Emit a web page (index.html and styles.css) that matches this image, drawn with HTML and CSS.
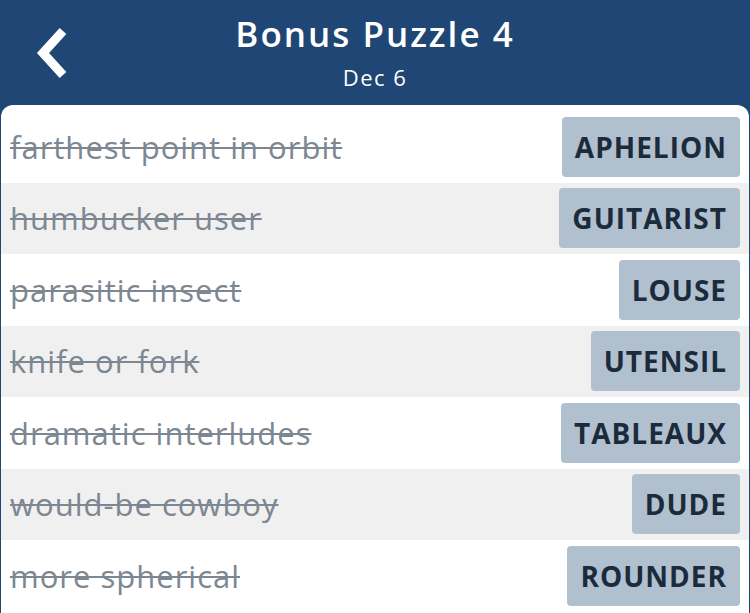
FILE: index.html
```html
<!DOCTYPE html>
<html lang="en">
<head>
    <meta charset="UTF-8">
    <meta name="viewport" content="width=device-width, initial-scale=1.0">
    <title>Bonus Puzzle 4</title>
    <link rel="stylesheet" href="styles.css">
</head>
<body>

    <header class="top-bar">
        <a class="back" href="#" aria-label="Back">
            <svg width="34" height="54" viewBox="0 0 34 54">
                <path d="M29 5 L9 27 L29 49" fill="none" stroke="#fff" stroke-width="9" stroke-linecap="butt" stroke-linejoin="miter"/>
            </svg>
        </a>
        <div class="titles">
            <h1>Bonus Puzzle 4</h1>
            <p>Dec 6</p>
        </div>
    </header>

    <!-- solved clues -->
    <ul class="clue-list">
        <li class="clue">
            <span class="clue-text">farthest point in orbit</span>
            <span class="answer">APHELION</span>
        </li>
        <li class="clue">
            <span class="clue-text">humbucker user</span>
            <span class="answer">GUITARIST</span>
        </li>
        <li class="clue">
            <span class="clue-text">parasitic insect</span>
            <span class="answer">LOUSE</span>
        </li>
        <li class="clue">
            <span class="clue-text">knife or fork</span>
            <span class="answer">UTENSIL</span>
        </li>
        <li class="clue">
            <span class="clue-text">dramatic interludes</span>
            <span class="answer">TABLEAUX</span>
        </li>
        <li class="clue">
            <span class="clue-text">would-be cowboy</span>
            <span class="answer">DUDE</span>
        </li>
        <li class="clue">
            <span class="clue-text">more spherical</span>
            <span class="answer">ROUNDER</span>
        </li>
    </ul>

</body>
</html>
```

FILE: styles.css
```css
body {
    margin: 0;
    padding: 0;
    font-family: "Open Sans", Lato, sans-serif;
    background-color: #1f4674;
    overflow: hidden;
}

.top-bar {
    height: 105px;
    display: flex;
    align-items: flex-start;
    justify-content: center;
    color: #fff;
}

.back {
    position: absolute;
    left: 34px;
    top: 26px;
    display: block;
}

.titles {
    text-align: center;
    padding-top: 12px;
}

.titles h1 {
    margin: 0;
    font-size: 35px;
    font-weight: 600;
    line-height: 44px;
    letter-spacing: 2px;
}

.titles p {
    margin: 8px 0 0;
    font-size: 22px;
    line-height: 26px;
    letter-spacing: 1.5px;
}

.clue-list {
    list-style: none;
    margin: 0 1px;
    padding: 6px 0 0;
    background-color: #fff;
    border-radius: 12px 12px 0 0;
    height: 502px;
}

.clue {
    height: 71.5px;
    display: flex;
    align-items: center;
    justify-content: space-between;
    padding: 0 9px;
    box-sizing: border-box;
}

.clue:nth-child(even) {
    background-color: #f0f0f0;
}

.clue-text {
    font-size: 31px;
    letter-spacing: 1px;
    color: #7d8792;
    text-decoration: line-through;
    text-decoration-thickness: 2px;
}

.answer {
    background-color: #b0c0cf;
    color: #1c2b3b;
    font-size: 28px;
    font-weight: 700;
    letter-spacing: 1px;
    height: 60px;
    line-height: 60px;
    padding: 0 13px;
    border-radius: 4px;
}
```
